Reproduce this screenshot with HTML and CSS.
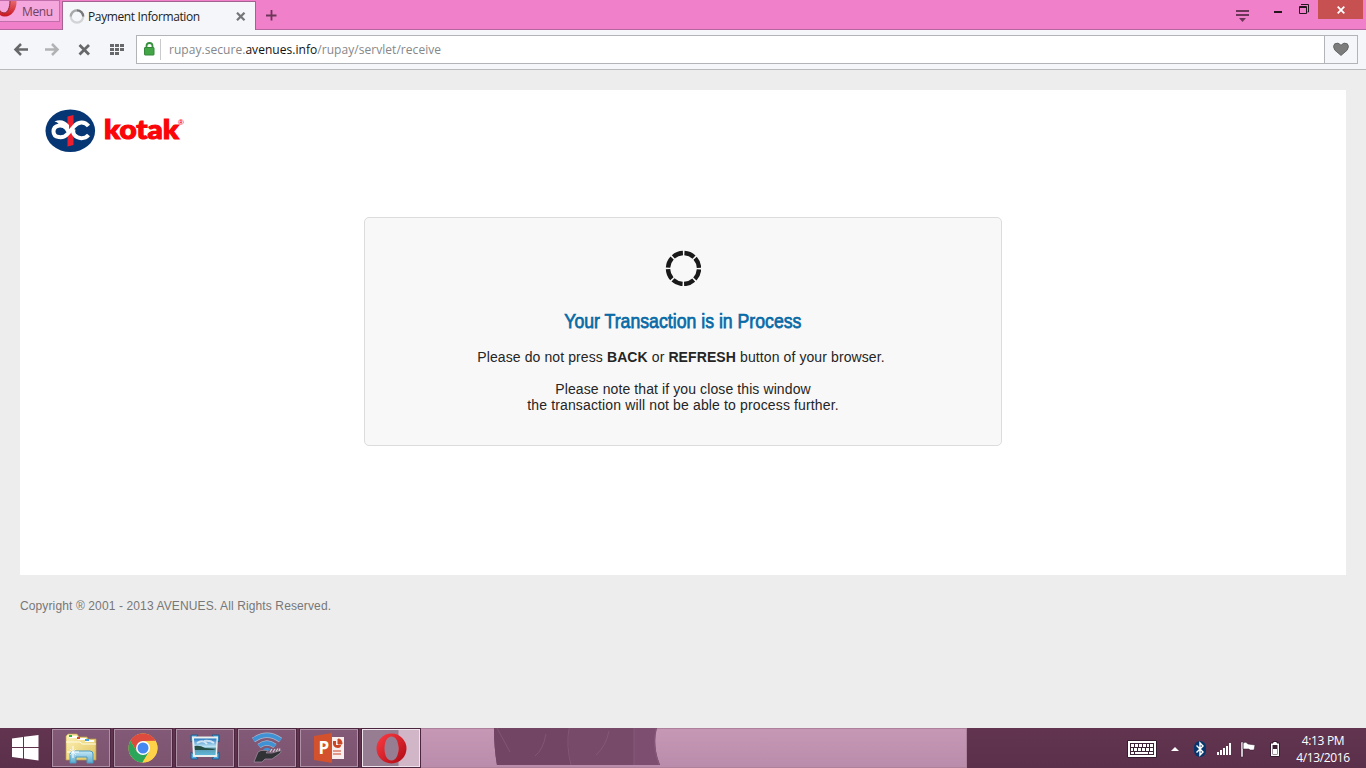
FILE: index.html
```html
<!DOCTYPE html>
<html lang="en">
<head>
<meta charset="utf-8">
<title>Payment Information</title>
<link rel="stylesheet" href="styles.css">
</head>
<body>
<header class="tabbar">
  <div class="menu">
    <svg width="18" height="17" viewBox="0 0 18 17"><defs><linearGradient id="om" x1="0" y1="0" x2="0" y2="1"><stop offset="0" stop-color="#e8686c"/><stop offset="1" stop-color="#c81420"/></linearGradient></defs><path d="M10 0h6.500C17 8 12 15.500 5 15.500Q2 15.500 0 14V9.500Q1 12 4 12C8 12 10 6 10 0Z" fill="url(#om)"/><path d="M0 9.500Q1 12 4 12C8 12 10 6 10 0" fill="none" stroke="#8e2830"/></svg>
    <span class="menu-label">Menu</span>
  </div>
  <div class="tab">
    <svg width="16" height="16" viewBox="0 0 16 16" fill="none" stroke-width="2.200"><circle cx="8" cy="7.500" r="6.200" stroke="#d2d3d5"/><path d="M1.800 7.500A6.200 6.200 0 0 1 8 1.300" stroke="#a8a9aa"/><path d="M8 1.300A6.200 6.200 0 0 1 14.200 7.500" stroke="#77797b"/></svg>
    <span class="tab-title">Payment Information</span>
    <svg class="tab-close" width="10" height="10" viewBox="0 0 10 10"><path d="M1 .7 8.500 8.300M8.500.7 1 8.300" stroke="#747678" stroke-width="2.200"/></svg>
  </div>
  <svg class="plus" width="11" height="11" viewBox="0 0 11 11"><path d="M5.500 0V10.500M0 5.500H10.500" stroke="#6d3659" stroke-width="1.800"/></svg>
  <div class="controls">
    <svg class="tabmenu" width="14" height="13" viewBox="0 0 14 13" fill="#6d3659"><path d="M0 0h13v2H0zM0 4h13v2H0zM3 8h7L6.500 12z"/></svg>
    <svg class="minimise" width="8" height="2"><path d="M0 0h8v2H0z" fill="#25151e"/></svg>
    <svg class="restore" width="11" height="11" viewBox="0 0 11 11"><path d="M2 .5H9.500V8H8.500M2.500 1V.5" fill="none" stroke="#25151e"/><path d="M.5 2.500h7v7h-7zM.5 3.500h7" fill="none" stroke="#25151e"/></svg>
    <div class="close"><svg width="8" height="8" viewBox="0 0 8 8"><path d="M.7.7 7.300 7.300M7.300.7.7 7.300" stroke="#fff" stroke-width="1.800"/></svg></div>
  </div>
</header>
<nav class="toolbar">
  <svg class="nav-icons" width="128" height="38" viewBox="0 0 128 38">
    <path d="M28 19.500H16M21 14 15.500 19.500 21 25" fill="none" stroke="#676869" stroke-width="2.500"/>
    <path d="M45 19.500H57M52 14 57.500 19.500 52 25" fill="none" stroke="#b0b2b3" stroke-width="2.500"/>
    <path d="M79.500 15 89 24.500M89 15 79.500 24.500" fill="none" stroke="#676869" stroke-width="2.800"/>
    <path d="M110 14h4v3h-4zM115 14h4v3h-4zM120 14h4v3h-4zM110 18h4v3h-4zM115 18h4v3h-4zM120 18h4v3h-4zM110 22h4v3h-4zM115 22h4v3h-4z" fill="#676869"/>
  </svg>
  <div class="address">
    <svg class="lock" width="11" height="14" viewBox="0 0 11 14"><path d="M2.500 6V4Q2.500 1 5.500 1T8.500 4V6" fill="none" stroke="#36903d" stroke-width="1.800"/><rect x=".5" y="5.500" width="9.500" height="7.500" rx=".5" fill="#42a647" stroke="#34873b"/></svg>
    <div class="url">rupay.secure.<span class="domain">avenues.info</span>/rupay/servlet/receive</div>
    <div class="bookmark"><svg width="16" height="15" viewBox="0 0 17 15"><path d="M8.500 13.800 2 8.200Q-.8 4 1.800 1.500 5.500-.8 8.500 3 11.500-.8 15.200 1.500 17.800 4 15 8.200Z" fill="#7c7c7c" stroke="#626364"/></svg></div>
  </div>
</nav>
<main class="page">
  <section class="sheet">
    <svg class="logo" width="160" height="50" viewBox="0 0 160 50">
      <ellipse cx="25.300" cy="25.800" rx="24.800" ry="21.300" fill="#063774"/>
      <path d="M22.500 11.500 28.500 10V40L22.500 41.500Z" fill="#ed1f2f"/>
      <path d="M43.500 21C39.500 16 33 16.500 29 21.500L22.500 29C18 34 8.500 33 8.500 26.500C8.500 20 17 18.500 21.500 23.500L23 26" fill="none" stroke="#fff" stroke-width="4"/>
      <path d="M43.500 30C39.500 34.500 33 34 29.500 30Q27.500 27.500 28.500 24" fill="none" stroke="#fff" stroke-width="4"/>
      <path d="M9.500 16.500Q18 13 24 20V24L18 22 13 20Q15 18 9.500 16.500Z" fill="#fff"/>
      <text x="59" y="33.500" textLength="75" lengthAdjust="spacingAndGlyphs" class="brand">kotak</text>
      <text x="133" y="20" class="registered">®</text>
    </svg>
    <div class="notice">
      <svg class="spinner" width="36" height="36" viewBox="0 0 36 36"><circle cx="18.500" cy="18.500" r="15.500" pathLength="80" fill="none" stroke="#191919" stroke-width="4.400" stroke-dasharray="8.700 1.300" stroke-dashoffset="-.8"/></svg>
      <h1 class="heading"><span class="heading-text">Your Transaction is in Process</span></h1>
      <p class="warning">Please do not press <b>BACK</b> or <b>REFRESH</b> button of your browser.</p>
      <p class="note"><span class="note-lead">Please note that if you close this window</span><br>the transaction will not be able to process further.</p>
    </div>
  </section>
  <footer class="copyright">Copyright ® 2001 - 2013 AVENUES. All Rights Reserved.</footer>
</main>
<div class="taskbar">
  <svg class="wallpaper" width="569" height="40" viewBox="0 0 569 40" preserveAspectRatio="none">
    <defs><linearGradient id="wp" x1="0" y1="0" x2="0" y2="1"><stop offset="0" stop-color="#c698b6"/><stop offset="1" stop-color="#ba8cab"/></linearGradient></defs>
    <path d="M0 0H569V40H0z" fill="url(#wp)"/><path d="M0 .5H569M568.500 0V40M0 39.500H569" stroke="#ad809c" fill="none"/>
    <path d="M85 0H231Q227 18 232 37H88Q85 20 85 0Z" transform="translate(11)" fill="#734564"/><path d="M96 0H259Q254 18 262 37H99Q96 20 96 0Z" fill="#734564"/><path d="M171 0H240V37H173Q170 18 171 0Z" fill="#784a6a"/><path d="M236 0H258Q255 20 262 37H236Z" fill="#7d4e70"/><path d="M99 0 112 24M171 0Q168 18 173 37M236 0V37M211 3Q208 18 198 27M148 6Q145 22 137 28M258 0Q254 18 261 37" fill="none" stroke="#8e607e" opacity=".6"/>
  </svg>
  <div class="start"><svg width="28" height="26" viewBox="0 0 28 26" fill="#fff"><path d="M0 3.500 11 2V12H0zM12 1.800 26.500 0V12H12zM0 13H11V23.500L0 22zM12 13H26.500V25.500L12 23.500z"/></svg></div>
  <div class="tasks">
    <div class="task"><svg width="34" height="32" viewBox="0 0 34 32"><defs><linearGradient id="fo" x1="0" y1="0" x2="1" y2="1"><stop offset="0" stop-color="#fff3b8"/><stop offset="1" stop-color="#dfc25e"/></linearGradient><linearGradient id="bl" x1="0" y1="0" x2="0" y2="1"><stop offset="0" stop-color="#c4e8f5"/><stop offset="1" stop-color="#5ba9cf"/></linearGradient></defs><path d="M2 28V4L4 2H13L15 5H23L24 7H32V28Z" fill="url(#fo)" stroke="#bb9c45" stroke-width=".7"/><path d="M5 4h8v2H5zM13 6h9v2h-9zM21 8h9v2h-9z" fill="#fff"/><path d="M5 3h3v2H5z" fill="#32b340"/><path d="M13 5h3v2h-3z" fill="#d44c34"/><path d="M21 7h4v2h-4z" fill="#3ea3de"/><path d="M2 10H16L18 12H32" fill="none" stroke="#fffbe0"/><path d="M6 31V22Q6 19 10 19H26Q29 19 29 22V31H23V25H12V31Z" fill="url(#bl)" stroke="#4d9ac1"/><path d="M9 14v12M3 20h12" stroke="#fff"/><path d="M6 17l6 6M12 17l-6 6" stroke="#fff" stroke-width=".6"/></svg></div>
    <div class="task"><svg width="30" height="30" viewBox="0 0 30 30"><circle cx="15" cy="15" r="14.500" fill="#fdd148"/><path d="M2.400 7.800A14.500 14.500 0 0 1 27.600 7.800L15 8 8.800 18.600Z" fill="#dd4b3e"/><path d="M2.400 7.800A14.500 14.500 0 0 0 14.500 29.500L21.200 18.600H8.800Z" fill="#2ba55a"/><path d="M15 8H27.600A14.500 14.500 0 0 1 14.500 29.500L21.200 18.600Z" fill="#fdd148"/><circle cx="15" cy="15" r="7" fill="#fff"/><circle cx="15" cy="15" r="5.500" fill="#4688f1"/></svg></div>
    <div class="task"><svg class="photo" width="30" height="26" viewBox="0 0 30 26"><defs><linearGradient id="sk" x1="0" y1="0" x2="0" y2="1"><stop offset="0" stop-color="#2878c3"/><stop offset=".5" stop-color="#c0e6f5"/><stop offset=".6" stop-color="#5b98ad"/><stop offset="1" stop-color="#5eb7d9"/></linearGradient></defs><path d="M1 1H8L5 5 1 8ZM22 1H29V8L25 5ZM1 18 5 21 8 25H1ZM29 18V25H22L25 21Z" fill="#4eabe4" stroke="#205b8a"/><path d="M2 2.500H28L27 23H3Z" fill="#e9f0ee"/><path d="M4 4.500H26.500L25.500 21H5Z" fill="url(#sk)"/><path d="M7 9Q13 5 17 10M14 7Q20 6 24 9" stroke="#fff" stroke-width="2" opacity=".7" fill="none"/><path d="M4.500 12Q10 11 15 14L26 15 23 16H5Z" fill="#264e44"/></svg></div>
    <div class="task"><svg width="32" height="32" viewBox="0 0 32 32"><path d="M2.500 8Q16-1.500 29.500 8M8 14Q16 8 24 14" fill="none" stroke="#b5b5cd" stroke-width="5.200"/><path d="M2.500 8Q16-1.500 29.500 8M8 14Q16 8 24 14" fill="none" stroke="#3f93d4" stroke-width="4"/><path d="M12 17.500Q16 14 20 17.500L17 19H15Z" fill="#3f93d4"/><path d="M3 30 7 20 10 18.500H17L15 21H21L30 18.500Q31 20 28 22L21 27H14L11 30Z" fill="#303236" stroke="#a493a3" stroke-width=".7"/><path d="M19 20 21 17M22 20 24 17M25 19.500 27 16.500M28 19 29 16.500" stroke="#d1ced4" stroke-width="1.200"/></svg></div>
    <div class="task"><svg width="31" height="30" viewBox="0 0 31 30"><path d="M16 4H30V26H16z" fill="#f8eeee"/><path d="M19 8Q18 15 24 15Q27 15 27 12H22V8Z" fill="#cb4525"/><path d="M24 6V11H28Q28 6 24 6ZM19 18H27M19 21H27" fill="#cb4525" stroke="#cb4525"/><path d="M0 3 18 0V30L0 27Z" fill="#d4512d"/><text x="4.500" y="21" class="slides-letter">P</text></svg></div>
    <div class="task active"><svg width="31" height="31" viewBox="0 0 31 31"><defs><linearGradient id="op" x1="0" y1="0" x2="1" y2="1"><stop offset="0" stop-color="#ff3c43"/><stop offset="1" stop-color="#ad0914"/></linearGradient></defs><path fill-rule="evenodd" fill="url(#op)" d="M15.500.5A15 15 0 1 1 15.500 30.500A15 15 0 1 1 15.500.5ZM15.500 3.500C11 3.500 8.500 9 8.500 15.500S11 27.500 15.500 27.500 22.500 22 22.500 15.500 20 3.500 15.500 3.500Z"/></svg></div>
  </div>
  <div class="tray">
    <svg width="158" height="24" viewBox="0 0 158 24">
      <path d="M.5 3.500h29v17H.5z" fill="#fff" stroke="#351b30"/><path d="M3 6h24v12H3z" fill="#3b2236"/><path d="M4 7h3v3H4zM8 7h3v3H8zM12 7h3v3h-3zM16 7h3v3h-3zM20 7h2v3h-2zM23 7h3v3h-3zM4 11h2v3H4zM7 11h3v3H7zM11 11h3v3h-3zM15 11h3v3h-3zM19 11h3v3h-3zM23 11h3v3h-3zM4 15h3v2H4zM8 15h13v2H8zM22 15h4v2h-4z" fill="#fff"/>
      <path d="M44 14 48 10 52 14Z" fill="#fff"/>
      <rect x="67" y="4" width="12" height="16" rx="6" fill="#07366d"/><path d="M69.500 8.500 76 15 73 18V6L76 9 69.500 15.500" stroke="#fff" stroke-width="1.400" fill="none"/>
      <path d="M90 15h2v3h-2zM93 13h2v5h-2zM96 11h2v7h-2zM99 9h2v9h-2zM102 6h2v12h-2z" fill="#fff"/>
      <path d="M114 5h2v15h-2zM116 6q3-2 5 1l7 1-1 5h-4l-1-1h-6z" fill="#fff" stroke="#351b30" stroke-width=".5"/>
      <path d="M146 6V4.500h4V6h2.500v13.500h-9V6z" fill="#fff" stroke="#351b30"/><path d="M145.500 8h5v9.500h-5z" fill="#3b2236"/><path d="M146 12h4v5h-4z" fill="#fff"/>
    </svg>
    <div class="clock"><span class="time">4:13 PM</span><span class="date">4/13/2016</span></div>
  </div>
</div>
</body>
</html>
```
FILE: styles.css
```css
* { box-sizing: border-box; }
body { margin: 0; width: 1366px; height: 768px; overflow: hidden; display: flex; flex-direction: column; background: #ededed; font-family: "Liberation Sans", sans-serif; }
svg { display: block; flex: none; }
.tabbar { height: 30px; flex: none; display: flex; background: #f180ca; border-bottom: 1px solid #b767a0; font-family: "Open Sans", sans-serif; }
.menu { width: 60px; height: 22px; display: flex; align-items: flex-start; background: #f5a6dc; border: 1px solid #c16eaa; border-left: 0; }
.menu-label { font-size: 12px; line-height: 20px; padding: 1px 0 0 4px; color: #704060; letter-spacing: -.4px; }
.tab { width: 194px; height: 30px; margin: 1px 0 -1px 2px; padding: 0 9px 0 6px; display: flex; align-items: center; background: #f4f6f9; border: 1px solid #a3628f; border-bottom: 0; }
.tab-title { font-size: 12px; margin-left: 3px; color: #222; letter-spacing: -.38px; white-space: nowrap; }
.tab-close { margin-left: auto; }
.plus { margin: 10px 0 0 10px; }
.controls { margin-left: auto; display: flex; }
.tabmenu { margin: 10px 24px 0 0; }
.minimise { margin: 11px 17px 0 0; }
.restore { margin: 4px 8px 0 0; }
.close { width: 45px; height: 19px; margin-right: 3px; display: grid; place-items: center; background: #c75051; }
.toolbar { height: 40px; flex: none; display: flex; padding: 5px 8px 5px 0; background: #f4f6f9; border-bottom: 1px solid #b8babc; }
.nav-icons { margin: -5px 8px 0 0; }
.address { flex: 1; height: 29px; display: flex; background: #fff; border: 1px solid #b2b4b7; }
.lock { margin: 6px 5px 0 7px; }
.url { flex: 1; margin: 3px 0; padding-left: 8px; border-left: 1px solid #c9cacc; font: 12px/21px "Open Sans", sans-serif; letter-spacing: .045px; color: #85878a; }
.domain { color: #111; }
.bookmark { width: 33px; display: grid; place-items: center; background: #f4f6f9; border-left: 1px solid #b2b4b7; }
.page { height: 658px; flex: none; padding: 20px; }
.sheet { height: 485px; padding-top: 15px; background: #fff; }
.logo { margin-left: 25px; }
.brand { font: 900 26px Lato, sans-serif; fill: #fa0508; stroke: #fa0508; stroke-width: 1.1px; }
.registered { font: bold 8px "Liberation Sans", sans-serif; fill: #fa0508; }
.notice { width: 638px; height: 229px; margin: 62px auto 0; padding-top: 32px; background: #f8f8f8; border: 1px solid #dcdcdc; border-radius: 5px; text-align: center; color: #252525; }
.spinner { margin: 0 auto; }
.heading { margin: 22px 0 0; height: 26px; line-height: 26px; font-size: 21px; font-weight: normal; color: #086aa6; }
.heading-text { display: inline-block; transform: scaleX(.842); -webkit-text-stroke: .75px #086aa6; white-space: nowrap; margin: 0 -40px; }
.warning { margin: 15px 4px 0 0; font-size: 14px; line-height: 16px; letter-spacing: .1px; }
.note { margin: 16px 0 0; font-size: 14px; line-height: 16px; letter-spacing: .14px; }
.note-lead { letter-spacing: .1px; }
.copyright { margin-top: 23px; font-size: 12px; line-height: 16px; color: #777; letter-spacing: .12px; }
.taskbar { height: 40px; flex: none; position: relative; display: flex; background: linear-gradient(#62344f, #5b304a); }
.wallpaper { position: absolute; left: 398px; top: 0; }
.start { width: 52px; padding: 7px 0 0 12px; }
.tasks { display: flex; gap: 4px; padding-top: 1px; position: relative; }
.task { width: 58px; height: 38px; display: grid; place-items: center; background: linear-gradient(#825a77, #7c5470); border: 1px solid #af91a6; outline: 1px solid #4c263e; }
.photo { margin-bottom: 3px; }
.slides-letter { font: bold 17px "Open Sans", sans-serif; fill: #fff; }
.active { border-color: #f0e4ec; background: linear-gradient(90deg, #967d91 0 35px, #d1b6c8 36px); }
.tray { margin-left: auto; display: flex; padding: 9px 3px 0 0; }
.tray svg { margin-right: -2px; }
.clock { width: 80px; margin-top: -5px; display: flex; flex-direction: column; align-items: center; color: #fff; font: 12px/17px "Open Sans", sans-serif; letter-spacing: -.35px; }
```
